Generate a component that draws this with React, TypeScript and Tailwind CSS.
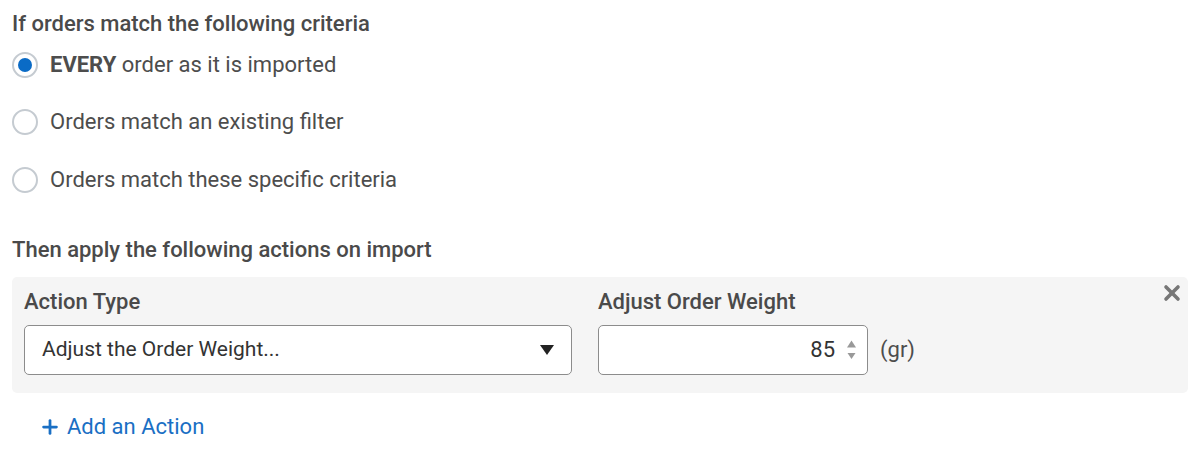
import { Plus, X } from 'lucide-react';

const options = [
  { id: 'every', label: (
    <>
      <span className="font-bold">EVERY</span> order as it is imported
    </>
  ), checked: true },
  { id: 'filter', label: 'Orders match an existing filter', checked: false },
  { id: 'specific', label: 'Orders match these specific criteria', checked: false },
];

function Radio({ checked }: { checked: boolean }) {
  return (
    <span className="flex h-[26px] w-[26px] shrink-0 items-center justify-center rounded-full border-2 border-[#c5cbd1] bg-white">
      {checked && <span className="h-[14px] w-[14px] rounded-full bg-[#0a6bc6]" />}
    </span>
  );
}

export default function App() {
  return (
    <div
      className="min-h-[450px] bg-white px-[12px] pt-[12px] text-[#4a4a4a]"
      style={{ fontFamily: 'Roboto, "Noto Sans", sans-serif' }}
    >
      <div className="text-[22px] font-medium leading-[24px]">If orders match the following criteria</div>

      <div className="flex flex-col">
        {options.map((o) => (
          <label key={o.id} className="flex h-[57.5px] items-center gap-[12px]">
            <Radio checked={o.checked} />
            <span className="text-[22px] leading-[26px] text-[#4d4d4d]">{o.label}</span>
          </label>
        ))}
      </div>

      <div className="mt-[28px] text-[22px] font-medium leading-[26px]">
        Then apply the following actions on import
      </div>

      <div className="relative mt-[14px] flex h-[116px] gap-[26px] rounded-[5px] bg-[#f5f5f5] px-[12px] pt-[12px]">
        <div className="flex w-[548px] flex-col">
          <div className="text-[22px] font-medium leading-[26px]">Action Type</div>
          <div className="mt-[10px] flex h-[50px] items-center justify-between rounded-[5px] border border-[#8c8c8c] bg-white pl-[17px] pr-[17px]">
            <span className="text-[21px] text-[#333]">Adjust the Order Weight...</span>
            <svg width="14" height="10" viewBox="0 0 14 10">
              <path d="M0 0h14L7 10z" fill="#222" />
            </svg>
          </div>
        </div>

        <div className="flex flex-col">
          <div className="text-[22px] font-medium leading-[26px]">Adjust Order Weight</div>
          <div className="mt-[10px] flex items-center gap-[12px]">
            <div className="flex h-[50px] w-[270px] items-center justify-end rounded-[5px] border border-[#8c8c8c] bg-white pr-[10px]">
              <span className="text-[22px] text-[#333]">85</span>
              <svg className="ml-[11px]" width="11" height="22" viewBox="0 0 11 22">
                <path d="M5.5 1.5L10 8.5H1z" fill="#999" />
                <path d="M1.5 14h8l-4 6z" fill="#999" />
              </svg>
            </div>
            <span className="text-[22px] text-[#4d4d4d]">(gr)</span>
          </div>
        </div>

        <X className="absolute right-[4px] top-[4px] h-[24px] w-[24px] text-[#777]" strokeWidth={3.6} />
      </div>

      <button className="mt-[21px] flex items-center gap-[6px] pl-[27px] text-[22px] leading-[26px] text-[#1a6fc4]">
        <Plus className="h-[22px] w-[22px]" strokeWidth={3} />
        Add an Action
      </button>
    </div>
  );
}
